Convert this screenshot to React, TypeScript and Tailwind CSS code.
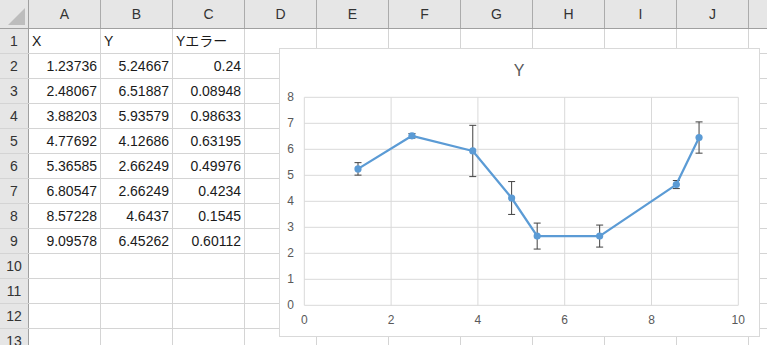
import React from "react";

const cols = ["A", "B", "C", "D", "E", "F", "G", "H", "I", "J"];

const data: [number, number, number][] = [
  [1.23736, 5.24667, 0.24],
  [2.48067, 6.51887, 0.08948],
  [3.88203, 5.93579, 0.98633],
  [4.77692, 4.12686, 0.63195],
  [5.36585, 2.66249, 0.49976],
  [6.80547, 2.66249, 0.4234],
  [8.57228, 4.6437, 0.1545],
  [9.09578, 6.45262, 0.60112],
];

// chart-local coordinates
const px = (x: number) => 25.3 + x * 43.4;
const py = (y: number) => 257.3 - y * 26;

function Chart() {
  const line = data.map(([x, y]) => `${px(x).toFixed(1)},${py(y).toFixed(1)}`).join(" ");
  return (
    <div className="absolute left-[279px] top-[48px] w-[481px] h-[289px] bg-white border border-[#d9d9d9]">
      <svg width="480" height="288" className="absolute -left-px -top-px" style={{ fontFamily: "'Liberation Sans', sans-serif" }}>
        <text x="240" y="28" textAnchor="middle" fontSize="16" fill="#595959">
          Y
        </text>
        {[0, 1, 2, 3, 4, 5, 6, 7, 8].map((v) => (
          <g key={"h" + v}>
            <line x1={px(0)} x2={px(10)} y1={py(v)} y2={py(v)} stroke="#d9d9d9" strokeWidth="1" />
            <text x="15" y={py(v) + 4} textAnchor="end" fontSize="12" fill="#595959">
              {v}
            </text>
          </g>
        ))}
        {[0, 2, 4, 6, 8, 10].map((v) => (
          <g key={"v" + v}>
            <line x1={px(v)} x2={px(v)} y1={py(8)} y2={py(0)} stroke="#d9d9d9" strokeWidth="1" />
            <text x={px(v)} y="276" textAnchor="middle" fontSize="12" fill="#595959">
              {v}
            </text>
          </g>
        ))}
        {data.map(([x, y, e], i) => (
          <g key={"e" + i} stroke="#404040" strokeWidth="1">
            <line x1={px(x)} x2={px(x)} y1={py(y + e)} y2={py(y - e)} />
            <line x1={px(x) - 3.5} x2={px(x) + 3.5} y1={py(y + e)} y2={py(y + e)} />
            <line x1={px(x) - 3.5} x2={px(x) + 3.5} y1={py(y - e)} y2={py(y - e)} />
          </g>
        ))}
        <polyline points={line} fill="none" stroke="#5b9bd5" strokeWidth="2.25" strokeLinejoin="round" />
        {data.map(([x, y], i) => (
          <circle key={"m" + i} cx={px(x)} cy={py(y)} r="3.6" fill="#5b9bd5" />
        ))}
      </svg>
    </div>
  );
}

function rowCells(r: number): { t: string; right: boolean }[] {
  if (r === 1) return [
    { t: "X", right: false },
    { t: "Y", right: false },
    { t: "Yエラー", right: false },
  ];
  const d = data[r - 2];
  if (!d) return [];
  return d.map((v) => ({ t: String(v), right: true }));
}

export default function App() {
  const rows = Array.from({ length: 13 }, (_, i) => i + 1);
  return (
    <div
      className="relative w-[767px] h-[345px] overflow-hidden bg-white text-[14px] text-[#1a1a1a]"
      style={{ fontFamily: "'Liberation Sans', 'Noto Sans CJK JP', sans-serif" }}
    >
      {/* column headers */}
      <div className="flex h-[29px] bg-[#e6e6e6] border-b border-[#a0a0a0]">
        <div className="relative w-[29px] shrink-0 border-r border-[#a0a0a0]">
          <div className="absolute right-[3px] bottom-[3px] w-0 h-0 border-l-[17px] border-l-transparent border-b-[17px] border-b-[#bdbdbd]" />
        </div>
        {cols.map((c) => (
          <div
            key={c}
            className="w-[72px] shrink-0 border-r border-[#ababab] flex items-center justify-center text-[#333]"
          >
            {c}
          </div>
        ))}
        <div className="flex-1" />
      </div>
      {rows.map((r) => {
        const cells = rowCells(r);
        return (
          <div key={r} className="flex h-[25px] border-b border-[#d4d4d4]">
            <div className="w-[29px] shrink-0 bg-[#e6e6e6] border-r border-[#a0a0a0] flex items-center justify-center text-[#333]">
              {r}
            </div>
            {cols.map((c, i) => {
              const cell = cells[i];
              return (
                <div
                  key={c}
                  className={`w-[72px] shrink-0 border-r border-[#d4d4d4] px-[3px] flex items-center ${
                    cell && cell.right ? "justify-end" : "justify-start"
                  }`}
                >
                  {cell ? cell.t : ""}
                </div>
              );
            })}
            <div className="flex-1" />
          </div>
        );
      })}
      <Chart />
    </div>
  );
}
